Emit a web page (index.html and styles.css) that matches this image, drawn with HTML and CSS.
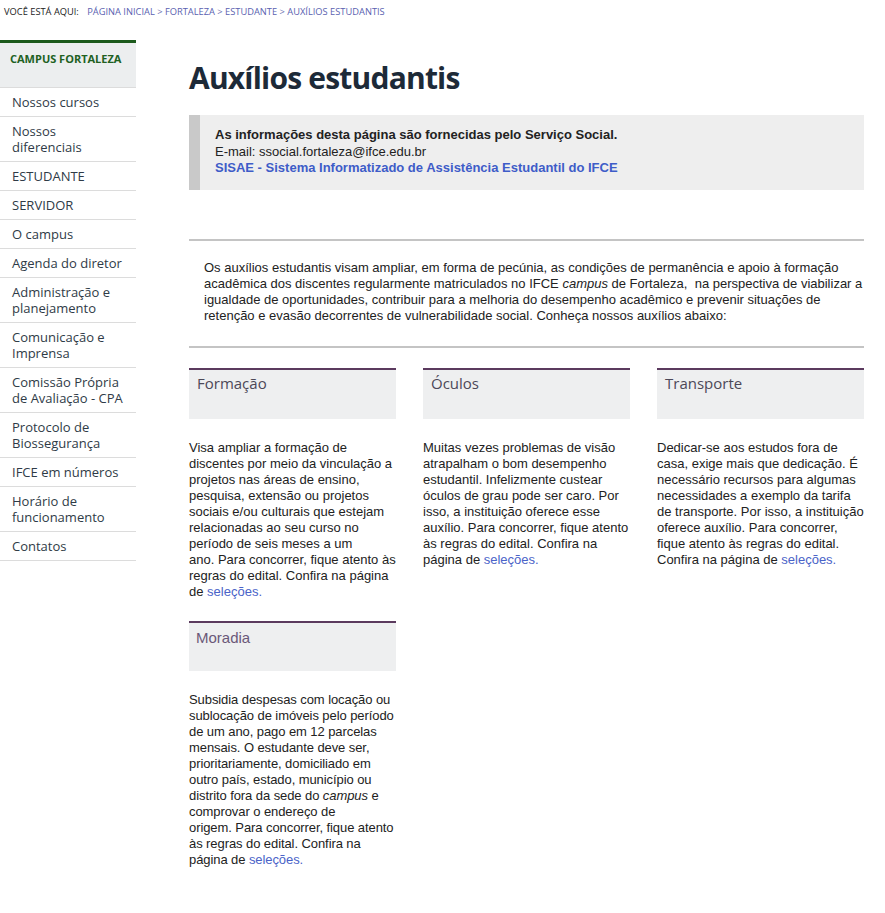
FILE: index.html
```html
<!DOCTYPE html>
<html lang="pt-BR">
<head>
<meta charset="utf-8">
<title>Auxílios estudantis</title>
<link rel="stylesheet" href="styles.css">
</head>
<body>
<div class="breadcrumb">
  <span class="bc-label">Você está aqui:</span>
  <a href="#">Página Inicial</a> &gt; <a href="#">Fortaleza</a> &gt; <a href="#">Estudante</a> &gt; <a href="#">Auxílios estudantis</a>
</div>
<div class="page">
  <nav class="sidebar">
    <div class="side-head">CAMPUS FORTALEZA</div>
    <ul class="side-list">
      <li><a href="#">Nossos cursos</a></li>
      <li><a href="#">Nossos diferenciais</a></li>
      <li><a href="#">ESTUDANTE</a></li>
      <li><a href="#">SERVIDOR</a></li>
      <li><a href="#">O campus</a></li>
      <li><a href="#">Agenda do diretor</a></li>
      <li><a href="#">Administração e planejamento</a></li>
      <li><a href="#">Comunicação e Imprensa</a></li>
      <li><a href="#">Comissão Própria de Avaliação - CPA</a></li>
      <li><a href="#">Protocolo de Biossegurança</a></li>
      <li><a href="#">IFCE em números</a></li>
      <li><a href="#">Horário de funcionamento</a></li>
      <li><a href="#">Contatos</a></li>
    </ul>
  </nav>
  <main class="content">
    <h1 class="title">Auxílios estudantis</h1>
    <div class="info">
      <strong>As informações desta página são fornecidas pelo Serviço Social.</strong><br>
      E-mail: ssocial.fortaleza@ifce.edu.br<br>
      <a class="info-link" href="#">SISAE - Sistema Informatizado de Assistência Estudantil do IFCE</a>
    </div>
    <hr class="rule rule-first">
    <p class="intro">Os auxílios estudantis visam ampliar, em forma de pecúnia, as condições de permanência e apoio à formação acadêmica dos discentes regularmente matriculados no IFCE <em>campus</em> de Fortaleza,&nbsp; na perspectiva de viabilizar a igualdade de oportunidades, contribuir para a melhoria do desempenho acadêmico e prevenir situações de retenção e evasão decorrentes de vulnerabilidade social. Conheça nossos auxílios abaixo:</p>
    <hr class="rule">
    <div class="cards">
      <div class="card">
        <div class="card-head"><span class="card-title">Formação</span></div>
        <p class="card-text">Visa ampliar a formação de discentes por meio da vinculação a projetos nas áreas de ensino, pesquisa, extensão ou projetos sociais e/ou culturais que estejam relacionadas ao seu curso no período de seis meses a um<br>ano. Para concorrer, fique atento às regras do edital. Confira na página de <a href="#">seleções.</a></p>
      </div>
      <div class="card">
        <div class="card-head"><span class="card-title">Óculos</span></div>
        <p class="card-text">Muitas vezes problemas de visão atrapalham o bom desempenho estudantil. Infelizmente custear óculos de grau pode ser caro. Por isso, a instituição oferece esse auxílio. Para concorrer, fique atento às regras do edital. Confira na página de <a href="#">seleções.</a></p>
      </div>
      <div class="card">
        <div class="card-head"><span class="card-title">Transporte</span></div>
        <p class="card-text">Dedicar-se aos estudos fora de casa, exige mais que dedicação. É necessário recursos para algumas necessidades a exemplo da tarifa de transporte. Por isso, a instituição oferece auxílio. Para concorrer, fique atento às regras do edital. Confira na página de <a href="#">seleções.</a></p>
      </div>
      <div class="card">
        <div class="card-head card-head-b"><span class="card-title plain">Moradia</span></div>
        <p class="card-text tight">Subsidia despesas com locação ou sublocação de imóveis pelo período de um ano, pago em 12 parcelas mensais. O estudante deve ser, prioritariamente, domiciliado em outro país, estado, município ou distrito fora da sede do <em>campus</em> e comprovar o endereço de<br>origem. Para concorrer, fique atento às regras do edital. Confira na página de <a href="#">seleções.</a></p>
      </div>
    </div>
  </main>
</div>
</body>
</html>
```
FILE: styles.css
```css
* { box-sizing: border-box; }
body {
  margin: 0;
  background: #fff;
  font-family: "Liberation Sans", Arial, sans-serif;
  color: #222;
}
a { text-decoration: none; }

.breadcrumb {
  font-family: "Open Sans", sans-serif;
  font-size: 9.3px;
  text-transform: uppercase;
  color: #6a6fb0;
  padding: 5px 4px 0;
  height: 24px;
  line-height: 14px;
}
.breadcrumb .bc-label { color: #222; margin-right: 6px; }
.breadcrumb a { color: #5a5fb0; }

.page {
  display: flex;
  align-items: flex-start;
}

.sidebar {
  width: 136px;
  flex: none;
  margin-top: 16px;
  font-family: "Open Sans", sans-serif;
}
.side-head {
  border-top: 3px solid #1c5a1c;
  background: #eceeef;
  color: #21611f;
  font-weight: 700;
  font-size: 11px;
  line-height: 16px;
  padding: 8px 10px 20px;
  border-bottom: 1px solid #dcdcdc;
}
.side-list { list-style: none; margin: 0; padding: 0; }
.side-list li { border-bottom: 1px solid #dcdcdc; }
.side-list a {
  display: block;
  padding: 6px 12px;
  font-size: 13px;
  line-height: 16px;
  color: #2f3b47;
}

.content {
  flex: 1;
  margin-left: 53px;
  margin-right: 21px;
}
.title {
  font-family: "Open Sans", sans-serif;
  font-weight: 700;
  font-size: 30px;
  line-height: 36px;
  color: #1d2a38;
  margin: 36px 0 19px 0;
  letter-spacing: -0.8px;
}
.info {
  background: #eeeeee;
  border-left: 11px solid #c9c9c9;
  padding: 12px 10px 13px 15px;
  font-size: 13px;
  line-height: 16.5px;
  color: #222;
}
.info strong { color: #222; }
.info-link { color: #3e5cc8; font-weight: 700; }

.rule {
  border: 0;
  height: 2px;
  background: #c4c4c4;
  margin: 0;
}
.rule-first { margin-top: 49px; }
.intro {
  margin: 0;
  padding: 19px 0 22px 15px;
  font-size: 13px;
  line-height: 16px;
  color: #222;
}
.intro a, .card-text a { color: #4a63c8; }

.cards {
  display: grid;
  grid-template-columns: repeat(3, 207px);
  column-gap: 27px;
  row-gap: 21px;
  margin-top: 20px;
}
.card-head {
  border-top: 2px solid #5b3a5e;
  background: #eeeff0;
  height: 51px;
  padding: 3px 8px 0;
}
.card-head-b { height: 50px; padding-top: 5px; padding-left: 7px; }
.card-title {
  font-family: "Open Sans", sans-serif;
  color: #4c4858;
  font-size: 15px;
  line-height: 20px;
}
.card-title.plain {
  font-family: "Liberation Sans", Arial, sans-serif;
  color: #6a5878;
}
.card-text {
  margin: 21px 0 0;
  font-size: 13px;
  line-height: 16px;
  color: #222;
}
.card-text.tight { letter-spacing: -0.08px; margin-right: -2px; }
```
